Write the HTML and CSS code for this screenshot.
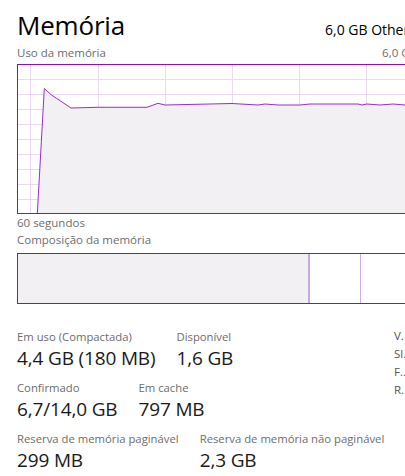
FILE: index.html
```html
<!DOCTYPE html>
<html lang="pt">
<head>
  <meta charset="UTF-8" />
  <meta name="viewport" content="width=device-width, initial-scale=1.0" />
  <title>Memória</title>
  <link rel="stylesheet" href="styles.css">
</head>
<body>
  <div class="page">
    <div class="head">
      <h1 class="title">Memória</h1>
      <span class="capacity">6,0 GB Other</span>
    </div>

    <div class="chart-label">
      <span>Uso da memória</span>
      <span>6,0 GB</span>
    </div>

    <svg class="chart" width="400" height="150" viewBox="0 0 400 150">
      <g class="grid">
        <line x1="0" y1="15.5" x2="400" y2="15.5" />
        <line x1="0" y1="30.5" x2="400" y2="30.5" />
        <line x1="0" y1="45.5" x2="400" y2="45.5" />
        <line x1="0" y1="60.5" x2="400" y2="60.5" />
        <line x1="0" y1="75.5" x2="400" y2="75.5" />
        <line x1="0" y1="90.5" x2="400" y2="90.5" />
        <line x1="0" y1="105.5" x2="400" y2="105.5" />
        <line x1="0" y1="120.5" x2="400" y2="120.5" />
        <line x1="0" y1="135.5" x2="400" y2="135.5" />
        <line x1="13.5" y1="0" x2="13.5" y2="150" />
        <line x1="81.5" y1="0" x2="81.5" y2="150" />
        <line x1="148.5" y1="0" x2="148.5" y2="150" />
        <line x1="215.5" y1="0" x2="215.5" y2="150" />
        <line x1="282.5" y1="0" x2="282.5" y2="150" />
        <line x1="349.5" y1="0" x2="349.5" y2="150" />
      </g>
      <path class="area" d="M20.3 150 L27.3 24.5 L34.5 31 L54 44 L81 43.3 L130 43.3 L141 39.3 L148 41 L215 39.5 L241 41 L248 40 L261 41 L283 41 L293 40 L341 40 L345 41 L350 40 L363 41 L376 40 L388 41 L400 41 L400 150 Z" />
      <polyline class="line" points="20.3,150 27.3,24.5 34.5,31 54,44 81,43.3 130,43.3 141,39.3 148,41 215,39.5 241,41 248,40 261,41 283,41 293,40 341,40 345,41 350,40 363,41 376,40 388,41 400,41" />
      <rect class="frame" x="0.5" y="0.5" width="399" height="149" />
    </svg>

    <div class="caption">60 segundos</div>
    <div class="caption">Composição da memória</div>

    <div class="composition">
      <div class="in-use"></div>
      <div class="modified"></div>
      <div class="standby"></div>
    </div>

    <div class="stats">
      <div class="stats-main">
        <div class="stat-row">
          <div class="stat">
            <div class="stat-label">Em uso (Compactada)</div>
            <div class="stat-value">4,4 GB (180 MB)</div>
          </div>
          <div class="stat">
            <div class="stat-label">Disponível</div>
            <div class="stat-value">1,6 GB</div>
          </div>
        </div>
        <div class="stat-row">
          <div class="stat">
            <div class="stat-label">Confirmado</div>
            <div class="stat-value">6,7/14,0 GB</div>
          </div>
          <div class="stat">
            <div class="stat-label">Em cache</div>
            <div class="stat-value">797 MB</div>
          </div>
        </div>
        <div class="stat-row">
          <div class="stat">
            <div class="stat-label">Reserva de memória paginável</div>
            <div class="stat-value">299 MB</div>
          </div>
          <div class="stat">
            <div class="stat-label">Reserva de memória não paginável</div>
            <div class="stat-value">2,3 GB</div>
          </div>
        </div>
      </div>
      <div class="stats-side">
        <div>V.</div>
        <div>Sl.</div>
        <div>F..</div>
        <div>R.</div>
      </div>
    </div>
  </div>
</body>
</html>
```

FILE: styles.css
```css
body {
  margin: 0;
  background: #ffffff;
  font-family: 'Open Sans', 'Noto Sans', sans-serif;
  color: #1a1a1a;
  overflow: hidden;
}
.page {
  width: 400px;
  padding: 6px 0 0 17px;
}
.head {
  display: flex;
  align-items: baseline;
  white-space: nowrap;
}
.title {
  width: 308px;
  margin: 0;
  font-size: 26px;
  font-weight: 400;
  line-height: 38px;
  letter-spacing: -0.2px;
  color: #000;
}
.capacity {
  font-size: 14px;
  color: #000;
}
.chart-label {
  display: flex;
  justify-content: space-between;
  font-size: 11.5px;
  line-height: 18px;
  color: #6d6d6d;
}
.chart {
  display: block;
  margin-top: 2px;
}
.grid line {
  stroke: #ead9f0;
  stroke-width: 1;
}
.area {
  fill: #f3f0f4;
}
.line {
  fill: none;
  stroke: #9b2ec2;
  stroke-width: 1;
}
.frame {
  fill: none;
  stroke: #8b12ae;
  stroke-width: 1;
}
.caption {
  font-size: 11.5px;
  line-height: 17px;
  color: #6d6d6d;
}
.composition {
  display: flex;
  height: 49px;
  margin-top: 5px;
  border: 1px solid #8b12ae;
}
.in-use {
  width: 290px;
  background: #f3f0f4;
  border-right: 2px solid #cba6de;
}
.modified {
  width: 50px;
  border-right: 1px solid #d3ace2;
}
.stats {
  display: flex;
  margin-top: 24px;
}
.stats-main {
  width: 377px;
}
.stat-row {
  display: flex;
  gap: 21px;
  margin-bottom: 8px;
}
.stat-label {
  font-size: 11.3px;
  line-height: 17px;
  color: #6d6d6d;
  white-space: nowrap;
}
.stat-value {
  font-size: 19px;
  line-height: 26px;
  letter-spacing: -0.15px;
  color: #1a1a1a;
  white-space: nowrap;
}
.stats-side {
  font-size: 11.5px;
  line-height: 18px;
  color: #555;
  margin-top: -1px;
}
```
